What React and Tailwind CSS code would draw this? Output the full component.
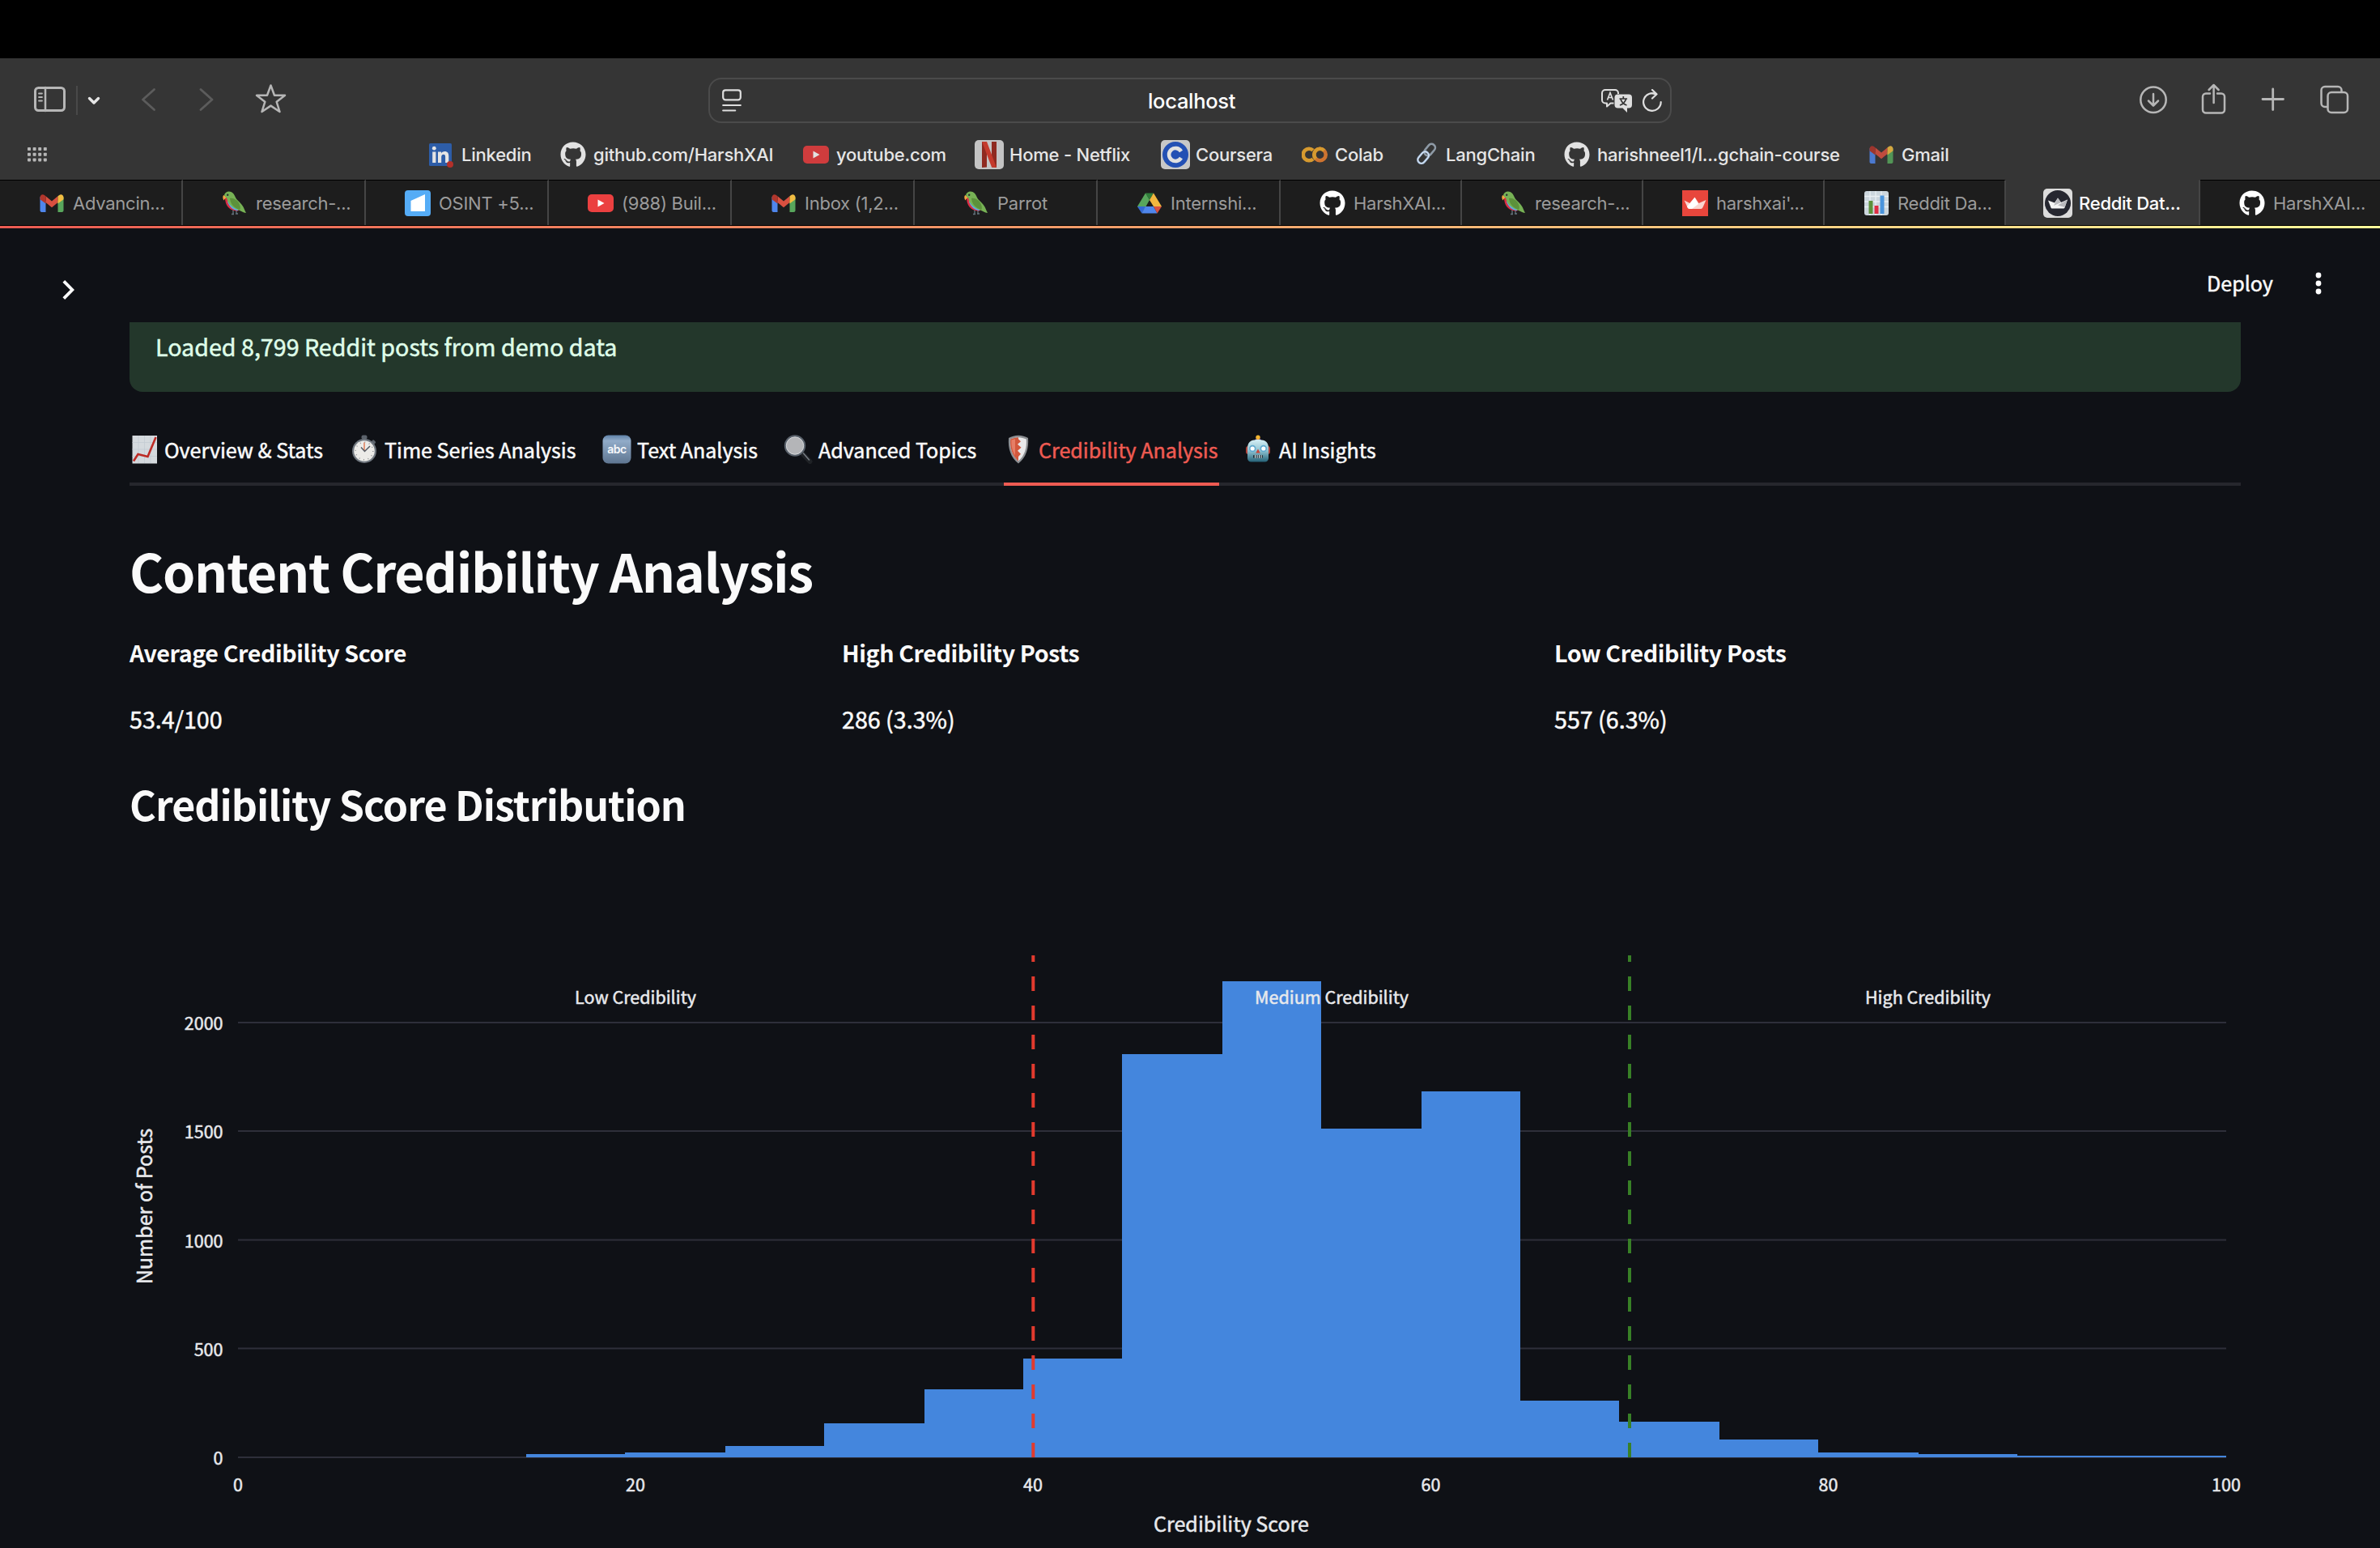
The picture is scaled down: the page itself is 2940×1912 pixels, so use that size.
import React from "react";
import { FaGithub } from "react-icons/fa";

const SANS = "font-['Noto_Sans_CJK_SC','Noto_Sans',sans-serif]";

/* ---------- site icons ---------- */

function GmailIcon({ dim }) {
  return (
    <svg viewBox="0 0 30 22" className={dim ? "w-[30px] h-[22px] opacity-85" : "w-[30px] h-[22px]"}>
      <path d="M0.5 3v17c0 1 .9 2 2 2h5V8z" fill="#4f86ec" />
      <path d="M29.500 3v17c0 1-.9 2-2 2h-5V8z" fill="#58a65c" />
      <path d="M22.500 2.300 15 8.600 7.500 2.300v7.800L15 16.300l7.500-6.200z" fill="#d95040" />
      <path d="M.5 4v2.300l7 5.200V2.300L5.800 1C3.500-.6.5.8.5 4z" fill="#b1362c" />
      <path d="M29.500 4v2.300l-7 5.200V2.300L24.200 1c2.300-1.600 5.300-.2 5.300 3z" fill="#f2bd42" />
    </svg>
  );
}

function ParrotIcon() {
  return (
    <svg viewBox="0 0 30 32" className="w-[30px] h-8">
      <path d="M13 24v5M17 24v5M11 29.500h3M16 29h3" stroke="#66757f" strokeWidth="1.300" fill="none" />
      <path d="M3 9c0 6 2 12 8 15 3 1.500 6 2 9 1L12 9z" fill="#dd2e44" />
      <path d="M6 14c2 6 7 11 13 11l1-4L9 12z" fill="#55acee" />
      <path d="M1.200 6C-.4 8 .3 11 1.600 12.500 2 10.500 4.500 10 4.500 8z" fill="#f4a442" />
      <path d="M2 6C3 2 7 .6 10.500 2c3 1.200 4 4 5.500 7 2 4.500 7 6 10 12.500 1 2.500 2 4.500 3 6.500-4-.5-6-2.500-9-3.500C12 22 6 16 5.500 10.500 5 9 3 8.500 2 6z" fill="#77b255" />
      <path d="M9 10c4-1 9 2 11.500 6.500 1.500 3 1.500 5.500 1 7.500-6-1.500-12-6-12.500-14z" fill="#5c913b" />
      <circle cx="6.200" cy="5.800" r="1.200" fill="#292f33" />
    </svg>
  );
}

function OsintIcon() {
  return (
    <svg viewBox="0 0 32 32" className="w-8 h-8">
      <rect width="32" height="32" rx="4" fill="#55acf6" />
      <path d="M7.500 26V13L25 5v21z" fill="#fff" />
    </svg>
  );
}

function YoutubeIcon({ dim }) {
  return (
    <svg viewBox="0 0 32 22" className="w-8 h-[22px]">
      <rect width="32" height="22" rx="5" fill={dim ? "#cf3c3d" : "#eb4040"} />
      <path d="M12.500 6.500v9l8-4.500z" fill={dim ? "#e2e2e2" : "#fff"} />
    </svg>
  );
}

function DriveIcon() {
  return (
    <svg viewBox="0 0 30 26" className="w-[30px] h-[26px]">
      <path d="M10 .5h10L15 9z" fill="#2f7d3a" />
      <path d="M10 .5 15 9 6 25 0 17z" fill="#58a65c" />
      <path d="M20 .5 30 17H20L15 9z" fill="#f2b63f" />
      <path d="M0 17h10L5.500 25.500z" fill="#3367d6" />
      <path d="M10 17h10l4.500 8.500h-19z" fill="#4f86ec" />
      <path d="M20 17h10l-5.500 8.500z" fill="#d95040" />
    </svg>
  );
}

function StreamlitRed() {
  return (
    <svg viewBox="0 0 32 32" className="w-8 h-8">
      <rect width="32" height="32" fill="#e8463c" />
      <path d="M2.500 12.500 9.500 16l6-7.500L20.500 16 29.500 12 26 20c-.8 2-1.500 3-3 3H9c-1.500 0-2.200-1-3-3z" fill="#f9d5d0" />
      <path d="M6 20 15.500 9 20 17l-8 6H9c-1.500 0-2.400-1.400-3-3z" fill="#fff" />
    </svg>
  );
}

function StreamlitDark() {
  return (
    <svg viewBox="0 0 36 36" className="w-9 h-9 shrink-0">
      <rect width="36" height="36" rx="5" fill="#dcdcdc" />
      <circle cx="18" cy="18" r="16" fill="#262730" />
      <path d="M6 14.500 14 17.500 18 11.500 22 17 30 13.500 26.500 23.500c-.3.700-.8 1-1.500 1H11c-.7 0-1.300-.3-1.500-1z" fill="#f4f4f4" />
      <path d="M18 11.500 22 17 13 21zM30 13.500 26.500 23 18 20.500z" fill="#b9b9bd" />
    </svg>
  );
}

function BarChartIcon() {
  return (
    <svg viewBox="0 0 30 30" className="w-[30px] h-[30px]">
      <rect width="30" height="30" rx="3" fill="#ccd6dd" />
      <path d="M0 6.500h30M0 13h30M0 19.500h30M7 0v30M14 0v30M21 0v30" stroke="#e9eff3" strokeWidth="1.300" />
      <rect x="5.500" y="12" width="5" height="16" fill="#5c913b" />
      <rect x="12.500" y="18" width="5" height="10" fill="#dd2e44" />
      <rect x="19.500" y="5.500" width="5" height="22.500" fill="#4a94dc" />
    </svg>
  );
}

function LinkedinIcon() {
  return (
    <svg viewBox="0 0 32 32" className="w-8 h-8">
      <rect x="1" y="2" width="28" height="28" rx="1.500" fill="#2d5da8" />
      <circle cx="7.300" cy="8.200" r="2.400" fill="#e4e4e4" />
      <path d="M5.200 12.500h4.200V26H5.200zM12 12.500h4v1.900c.8-1.400 2.300-2.300 4.300-2.300 3.700 0 5 2.200 5 6V26h-4.200v-7.200c0-2-.6-3.100-2.200-3.100-1.900 0-2.700 1.300-2.700 3.200V26H12z" fill="#e4e4e4" />
      <circle cx="27" cy="28" r="4" fill="#b3302a" />
    </svg>
  );
}

function NetflixIcon() {
  return (
    <svg viewBox="0 0 36 36" className="w-9 h-9 -mx-0.5 shrink-0">
      <rect width="36" height="36" rx="5" fill="#c4c4c4" />
      <path d="M9 2h6v31.500l-6 .5zM21 2h6v32l-6-.5z" fill="#8f2a20" />
      <path d="M9 2h6l12 32-6-.5z" fill="#c43a2c" />
    </svg>
  );
}

function CourseraIcon() {
  return (
    <svg viewBox="0 0 36 36" className="w-9 h-9 -mx-0.5 shrink-0">
      <rect width="36" height="36" rx="5" fill="#c8c8c8" />
      <circle cx="18" cy="18" r="16" fill="#2350b4" />
      <path d="M25 14a8 8 0 1 0 0 8" fill="none" stroke="#e0e0e0" strokeWidth="4.600" />
    </svg>
  );
}

function ColabIcon() {
  return (
    <svg viewBox="0 0 32 20" className="w-8 h-5" fill="none" strokeWidth="4.600">
      <path d="M14 4.600a7.300 7.300 0 1 0 0 10.800" stroke="#d69a2f" />
      <circle cx="22.500" cy="10" r="7.200" stroke="#cf7430" />
      <path d="M17.400 15.100A7.200 7.200 0 0 1 27.600 4.900" stroke="#d69a2f" />
    </svg>
  );
}

function LinkIcon() {
  return (
    <svg viewBox="0 0 32 32" className="w-8 h-8" fill="none">
      <g transform="rotate(40 17 15)">
        <rect x="12.500" y="0.500" width="9" height="16" rx="4.500" stroke="#8e9aa6" strokeWidth="2.600" />
        <rect x="12.500" y="13" width="9" height="16" rx="4.500" stroke="#a9c3e2" strokeWidth="2.600" />
        <rect x="12.500" y="13" width="9" height="16" rx="4.500" stroke="#e5eef8" strokeWidth="0.900" />
      </g>
    </svg>
  );
}

const GitMark = ({ dim }) => <FaGithub className={dim ? "w-8 h-8 text-[#e2e2e2]" : "w-8 h-8 text-white"} />;

/* ---------- browser chrome ---------- */

const bookmarks = [
  { label: "Linkedin", icon: <LinkedinIcon />, w: "w-[86px]" },
  { label: "github.com/HarshXAI", icon: <GitMark dim />, w: "w-[223px]" },
  { label: "youtube.com", icon: <YoutubeIcon dim />, w: "w-[137px]" },
  { label: "Home - Netflix", icon: <NetflixIcon />, w: "w-[153px]" },
  { label: "Coursera", icon: <CourseraIcon />, w: "w-[95px]" },
  { label: "Colab", icon: <ColabIcon />, w: "w-[60px]" },
  { label: "LangChain", icon: <LinkIcon />, w: "w-[110px]" },
  { label: "harishneel1/l...gchain-course", icon: <GitMark dim />, w: "w-[299px]" },
  { label: "Gmail", icon: <GmailIcon dim />, w: "w-[59px]" },
];

const tabs = [
  { label: "Advancin...", icon: <GmailIcon /> },
  { label: "research-...", icon: <ParrotIcon /> },
  { label: "OSINT +5...", icon: <OsintIcon /> },
  { label: "(988) Buil...", icon: <YoutubeIcon /> },
  { label: "Inbox (1,2...", icon: <GmailIcon /> },
  { label: "Parrot", icon: <ParrotIcon />, pad: "pl-[60px]" },
  { label: "Internshi...", icon: <DriveIcon /> },
  { label: "HarshXAI...", icon: <GitMark />, w: "w-[224px]" },
  { label: "research-...", icon: <ParrotIcon />, w: "w-[224px]" },
  { label: "harshxai'...", icon: <StreamlitRed />, w: "w-[224px]" },
  { label: "Reddit Da...", icon: <BarChartIcon />, w: "w-[224px]" },
  { label: "Reddit Dat...", icon: <StreamlitDark />, w: "w-[240px]", active: true },
  { label: "HarshXAI...", icon: <GitMark />, w: "w-[222px]", last: true },
];

function Toolbar() {
  return (
    <div className="flex h-[103px] items-start">
      <div className="flex w-[875px] items-start pl-[42px]">
        <svg viewBox="42 100 330 46" className="mt-7 h-[46px] w-[330px]" fill="none" strokeLinecap="round" strokeLinejoin="round">
          <rect x="43.500" y="108.500" width="36" height="28" rx="4" stroke="#b6b6b6" strokeWidth="3" />
          <path d="M56 108v29" stroke="#b6b6b6" strokeWidth="2.500" />
          <path d="M48 115.500h4M48 120h4M48 124.500h4" stroke="#b6b6b6" strokeWidth="1.800" />
          <path d="M95 106v36" stroke="#494949" strokeWidth="2" strokeLinecap="butt" />
          <path d="M110.500 121.500l5.500 5.500 5.500-5.500" stroke="#e6e6e6" strokeWidth="3.400" />
          <path d="M190.500 110.500 176.500 123l14 12.500" stroke="#5c5c5c" strokeWidth="2.800" />
          <path d="M248 110.500 262 123l-14 12.500" stroke="#5c5c5c" strokeWidth="2.800" />
          <path d="M334.500 105.500l4.500 12.300h13l-10.300 8 3.800 12.200-11-7.400-11 7.400 3.800-12.200-10.300-8h13z" stroke="#b6b6b6" strokeWidth="2.500" />
        </svg>
      </div>
      <div className="mt-6 flex h-14 w-[1190px] items-center rounded-2xl border-2 border-[#4b4b4b] pl-[15px] pr-2.5">
        <svg viewBox="0 0 24 28" className="h-7 w-6" fill="none" stroke="#dedede" strokeWidth="2.200" strokeLinecap="round">
          <rect x="1.200" y="1.300" width="21.600" height="12" rx="3" />
          <path d="M1.200 20h21.600M1.200 26.500h15" />
        </svg>
        <div className="ml-[502px] flex h-12 w-[120px] items-center whitespace-nowrap pt-0.5 text-[25.500px] font-medium tracking-[-0.3px] text-white">localhost</div>
        <svg viewBox="0 0 39 29" className="ml-auto h-[29px] w-[39px]" fill="none">
          <path d="M15.500 17.500h-4l-4.500 4v-4H5a4 4 0 0 1-4-4V5a4 4 0 0 1 4-4h12a4 4 0 0 1 4 4v1" stroke="#dedede" strokeWidth="2" strokeLinejoin="round" />
          <path d="M7.500 13.500 11 4.500l3.500 9M8.700 10.500h4.600" stroke="#dedede" strokeWidth="1.700" />
          <path d="M20.500 6.500H34a4 4 0 0 1 4 4v9a4 4 0 0 1-4 4h-2V29l-5.500-5.500h-6a4 4 0 0 1-4-4v-9a4 4 0 0 1 4-4z" fill="#dedede" />
          <path d="M27.300 9v2.500M22.500 12h9.600M24 12.500c1 3.500 3.500 6 7.500 7.500M30.500 12.500c-1 3.500-3.500 6-7.500 7.500" stroke="#353535" strokeWidth="1.700" />
        </svg>
        <svg viewBox="0 0 24 28" className="ml-3 h-7 w-6" fill="none" stroke="#dedede" strokeWidth="2.200" strokeLinecap="round" strokeLinejoin="round">
          <path d="M22.700 16A10.800 10.800 0 1 1 17 6.500l-4.500-1" />
          <path d="M12 1l5.500 5.200L12 11.500" />
        </svg>
      </div>
      <svg viewBox="2640 100 264 46" className="ml-auto mr-9 mt-7 h-[46px] w-[264px]" fill="none" stroke="#b6b6b6" strokeWidth="2.500" strokeLinecap="round" strokeLinejoin="round">
        <circle cx="2660" cy="123.300" r="15.700" />
        <path d="M2660 116v14M2654 124.500l6 6 6-6" />
        <path d="M2730 115.500h-5a4 4 0 0 0-4 4v16a4 4 0 0 0 4 4h19a4 4 0 0 0 4-4v-16a4 4 0 0 0-4-4h-5" />
        <path d="M2734.600 127v-21.500M2728.600 111l6-6 6 6" />
        <path d="M2795 122.500h25.500M2807.700 110v25.500" strokeWidth="2.800" />
        <path d="M2874 132h-2a4.500 4.500 0 0 1-4.500-4.500v-16a4.500 4.500 0 0 1 4.500-4.500h16a4.500 4.500 0 0 1 4.500 4.500v2" />
        <rect x="2875.500" y="114" width="24.500" height="25" rx="4.500" />
      </svg>
    </div>
  );
}

function Chrome() {
  return (
    <header className="font-['Inter',sans-serif]">
      <div className="h-[72px] bg-black" />
      <div className="h-[150px] bg-[#353535]">
        <Toolbar />
        <div className="flex h-8 items-center">
          <svg viewBox="0 0 24 18" className="ml-[34px] h-[18px] w-6 shrink-0" fill="#b6b6b6">
            {[0, 6.600, 13.200, 19.800].map((x) =>
              [0, 6.700, 13.400].map((y) => <rect key={x + "-" + y} x={x} y={y} width="4" height="4" rx="0.800" />)
            )}
          </svg>
          <div className="ml-[471px] flex items-center gap-9">
            {bookmarks.map((b) => (
              <div key={b.label} className="flex h-8 items-center gap-[9px]">
                <span className="flex w-8 shrink-0 items-center justify-center">{b.icon}</span>
                <span className={b.w + " whitespace-nowrap text-[22px] font-medium leading-8 tracking-[-0.22px] text-[#e6e6e6]"}>{b.label}</span>
              </div>
            ))}
          </div>
        </div>
      </div>
      <div className="flex h-[57px] border-b border-black">
        {tabs.map((t, i) => (
          <div
            key={i}
            className={
              "flex shrink-0 items-center gap-2.5 overflow-hidden whitespace-nowrap border-t text-[22px] leading-8 tracking-[-0.25px] " +
              (t.w || "w-[226px]") + " " + (t.pad || "pl-12") + " " +
              (t.last ? "" : "border-r-2 border-r-[#454545] ") +
              (t.active ? "border-t-[#353535] bg-[#353535] font-medium text-white" : "border-t-black bg-[#1d1d1d] text-[#9b9b9b]")
            }
          >
            <span className="flex w-8 shrink-0 items-center justify-center">{t.icon}</span>
            <span>{t.label}</span>
          </div>
        ))}
      </div>
      <div className="h-[3px] bg-linear-to-r from-[#ec5b52] via-[#f2a26b] to-[#fcfb9a]" />
    </header>
  );
}

/* ---------- section tab emoji ---------- */

const emoji = {
  trend: (
    <svg viewBox="0 0 36 36" className="h-9 w-9">
      <rect x="3.500" y="1" width="30.500" height="34.500" fill="#d5dade" />
      <path d="M11 1v34M18.500 1v34M26 1v34M3.500 9.500H34M3.500 18H34M3.500 26.500H34" stroke="#c3ccd3" strokeWidth="0.800" />
      <path d="M5 32.500 10.500 24l12 3L32.500 3" fill="none" stroke="#bd2b25" strokeWidth="2.600" />
    </svg>
  ),
  watch: (
    <svg viewBox="0 0 36 36" className="h-9 w-9">
      <rect x="14.500" y="0.500" width="7" height="5" rx="2" fill="#5b626b" />
      <rect x="27" y="7" width="5" height="4" rx="1.500" transform="rotate(42 29.500 9)" fill="#5b626b" />
      <circle cx="18" cy="20" r="15" fill="#70777f" />
      <circle cx="18" cy="20" r="12.800" fill="#ecebe8" />
      <circle cx="18" cy="20" r="10.800" fill="none" stroke="#8f9194" strokeWidth="1.500" strokeDasharray="1 4.650" />
      <path d="M18 20V9.500" stroke="#e2835f" strokeWidth="1.600" />
      <path d="M14 15.500 18.500 20.500 25 14" fill="none" stroke="#555b63" strokeWidth="1.500" />
    </svg>
  ),
  abc: (
    <svg viewBox="0 0 36 36" className="h-9 w-9">
      <defs>
        <linearGradient id="abcFill" x1="0" y1="0" x2="0" y2="1">
          <stop offset="0" stopColor="#5f82a8" />
          <stop offset="0.200" stopColor="#91abc8" />
          <stop offset="1" stopColor="#5f7691" />
        </linearGradient>
      </defs>
      <rect x="0.500" y="0.500" width="35" height="35" rx="7" fill="url(#abcFill)" />
      <text x="18" y="22.500" textAnchor="middle" fontSize="14" fontWeight="600" letterSpacing="-0.500" fill="#f6f8fb" fontFamily="Inter, sans-serif">abc</text>
    </svg>
  ),
  lens: (
    <svg viewBox="0 0 36 36" className="h-9 w-9">
      <path d="M24 24l8.500 9" stroke="#1f2226" strokeWidth="6" strokeLinecap="round" />
      <path d="M24.500 23l7 8" stroke="#777d84" strokeWidth="1.500" strokeLinecap="round" />
      <circle cx="14" cy="13.500" r="12" fill="#b4b5b8" stroke="#59616b" strokeWidth="2.400" />
      <circle cx="14" cy="13.500" r="10.700" fill="none" stroke="#dadcdf" strokeWidth="0.900" />
    </svg>
  ),
  shield: (
    <svg viewBox="0 0 36 36" className="h-9 w-9">
      <path d="M18 .8C22 1 27 2 30 4c1 13-2.500 24-12 31.500C8.500 28 5 17 6 4c3-2 8-3 12-3.200z" fill="#8c8f93" />
      <path d="M18 3.200c3.500.2 7 1 9.800 2.200.7 11-2 20-9.800 27C10.200 25.400 7.500 16.400 8.200 5.400 11 4.200 14.500 3.400 18 3.200z" fill="#e9e9ea" />
      <path d="M18 3.200v2l3 3-4 3.500 4.500 4-4.500 4 4 4L18 27v5.400C10.200 25.400 7.500 16.400 8.200 5.400 11 4.200 14.500 3.400 18 3.200z" fill="#d2583d" />
      <path d="M9.500 6.500c-.4 7 1 14 4.500 19V5.200z" fill="#ee8f77" opacity="0.700" />
    </svg>
  ),
  robot: (
    <svg viewBox="0 0 36 36" className="-ml-px h-9 w-9">
      <defs>
        <linearGradient id="botFill" x1="0" y1="0" x2="0" y2="1">
          <stop offset="0" stopColor="#d6eff5" />
          <stop offset="0.500" stopColor="#8fc3d2" />
          <stop offset="1" stopColor="#256277" />
        </linearGradient>
      </defs>
      <rect x="2" y="14" width="30" height="10" rx="3" fill="#b3453c" />
      <path d="M13.500 6.500c0-1.500 1.500-2 3.500-2s3.500.5 3.500 2v2h-7z" fill="#6c4aa0" />
      <circle cx="17" cy="3.200" r="2.700" fill="#f2b431" />
      <path d="M8.500 7.500c5-2 12-2 17 0 3 1.500 4.500 5 4.500 9V29c0 2.500-2 4.500-4.500 4.500h-17C6 33.500 4 31.500 4 29V16.500c0-4 1.500-7.500 4.500-9z" fill="url(#botFill)" />
      <circle cx="10.200" cy="17" r="4.200" fill="#5fa9cf" />
      <circle cx="23.800" cy="17" r="4.200" fill="#5fa9cf" />
      <circle cx="10.200" cy="17" r="2.600" fill="#fff" />
      <circle cx="23.800" cy="17" r="2.600" fill="#fff" />
      <path d="M17 17.500l2.700 5h-5.400z" fill="#c9463a" />
      <rect x="11" y="25" width="12" height="3.800" rx="0.800" fill="#243942" />
      <path d="M13.500 25v3.800M16 25v3.800M18.500 25v3.800M21 25v3.800" stroke="#e8f3f6" strokeWidth="1" />
    </svg>
  ),
};

const sections = [
  { label: "Overview & Stats", icon: emoji.trend, w: "w-[240px]" },
  { label: "Time Series Analysis", icon: emoji.watch, w: "w-[280px]" },
  { label: "Text Analysis", icon: emoji.abc, w: "w-[192px]" },
  { label: "Advanced Topics", icon: emoji.lens, w: "w-[240px]" },
  { label: "Credibility Analysis", icon: emoji.shield, w: "w-[266px]", active: true },
  { label: "AI Insights", icon: emoji.robot, w: "w-[164px]" },
];

const metrics = [
  { label: "Average Credibility Score", value: "53.4/100" },
  { label: "High Credibility Posts", value: "286 (3.3%)" },
  { label: "Low Credibility Posts", value: "557 (6.3%)" },
];

/* ---------- histogram ---------- */

const bars = [
  [650, 772, 1796], [772, 896, 1794], [896, 1018, 1786], [1018, 1142, 1758],
  [1142, 1264, 1716], [1264, 1386, 1678], [1386, 1510, 1302], [1510, 1632, 1212],
  [1632, 1756, 1394], [1756, 1878, 1348], [1878, 2000, 1730], [2000, 2124, 1756],
  [2124, 2246, 1778], [2246, 2370, 1794], [2370, 2492, 1796], [2492, 2750, 1798],
];
const yTicks = [[2000, 1263], [1500, 1397], [1000, 1531.500], [500, 1665.500], [0, 1800]];
const xTicks = [[0, 294], [20, 785], [40, 1276], [60, 1767.500], [80, 2258.500], [100, 2750]];

function Histogram() {
  return (
    <svg
      viewBox="160 1026 2608 886"
      className={"block h-[886px] w-[2608px] overflow-visible [&_text]:stroke-[#e8e9ec] [&_text]:[stroke-width:0.5px] " + SANS}
      fill="#e8e9ec"
    >
      {yTicks.map(([v, y]) => (
        <g key={v}>
          <rect x="294" y={y - 1} width="2456" height="2" fill="#2e2f3a" />
          <text x="275.500" y={y + 9.300} textAnchor="end" fontSize="21.500">{v}</text>
        </g>
      ))}
      {bars.map(([x0, x1, y]) => (
        <rect key={x0} x={x0} y={y} width={x1 - x0} height={1800 - y} fill="#4486dd" shapeRendering="crispEdges" />
      ))}
      <path d="M1276.300 1800V1180" stroke="#e23a2e" strokeWidth="4" strokeDasharray="18 18" />
      <path d="M2013 1800V1180" stroke="#388026" strokeWidth="4" strokeDasharray="18 18" />
      {xTicks.map(([v, x]) => (
        <text key={v} x={x} y="1842" textAnchor="middle" fontSize="21.500">{v}</text>
      ))}
      <g textAnchor="middle" fontSize="21.500">
        <text x="785" y="1240">Low Credibility</text>
        <text x="1645" y="1240">Medium Credibility</text>
        <text x="2381.500" y="1240">High Credibility</text>
      </g>
      <text x="1521" y="1892" textAnchor="middle" fontSize="25.070">Credibility Score</text>
      <text transform="translate(188 1490) rotate(-90)" textAnchor="middle" fontSize="25.070">Number of Posts</text>
    </svg>
  );
}

export default function App() {
  return (
    <div className="h-[1912px] w-[2940px] overflow-hidden bg-[#0f1116]">
      <Chrome />
      <div className={SANS + " text-[#fafafa] [-webkit-text-stroke-width:0.5px]"}>
        <div className="flex h-[116px] items-start">
          <svg viewBox="0 0 16 26" className="ml-[77px] mt-[63px] h-[26px] w-4" fill="none" stroke="#fff" strokeWidth="3.800">
            <path d="M1.800 2.300 12.300 13 1.800 23.700" />
          </svg>
          <div className="ml-auto mt-[47px] w-[134px] whitespace-nowrap text-[25.070px] leading-10">Deploy</div>
          <svg viewBox="0 0 8 28" className="mr-[72px] mt-[54px] h-7 w-2" fill="#fff">
            <circle cx="4" cy="4" r="3.400" />
            <circle cx="4" cy="14" r="3.400" />
            <circle cx="4" cy="24" r="3.400" />
          </svg>
        </div>
        <main className="ml-40 w-[2608px]">
          <div className="h-[86px] rounded-b-2xl bg-[#23372b] pl-8 pt-2.5 text-[28.650px] leading-10 text-[#dffde9]">
            Loaded 8,799 Reddit posts from demo data
          </div>
          <nav className="mt-8 flex h-[84px] gap-8 border-b-4 border-[#26272d]">
            {sections.map((s) => (
              <div
                key={s.label}
                className={
                  "flex h-[84px] shrink-0 items-center gap-[7px] whitespace-nowrap border-b-4 pb-0.5 text-[25.070px] " +
                  s.w + (s.active ? " border-[#ee5b52] text-[#ee5b52]" : " border-transparent")
                }
              >
                {s.icon}
                <span className="pt-0.5">{s.label}</span>
              </div>
            ))}
          </nav>
          <h1 className="mt-[61px] text-[64.500px] font-bold leading-[86px] tracking-[-1.300px] [-webkit-text-stroke-width:0]">Content Credibility Analysis</h1>
          <div className="mt-[33px] grid grid-cols-3 gap-8 text-[28.650px] leading-[52px]">
            {metrics.map((m) => (
              <div key={m.label}>
                <div className="font-bold tracking-[-0.420px] [-webkit-text-stroke-width:0]">{m.label}</div>
                <div className="mt-[30px]">{m.value}</div>
              </div>
            ))}
          </div>
          <h2 className="mt-11 text-[50.100px] font-bold leading-[68px] tracking-[-0.980px] [-webkit-text-stroke-width:0]">Credibility Score Distribution</h2>
          <Histogram />
        </main>
      </div>
    </div>
  );
}
